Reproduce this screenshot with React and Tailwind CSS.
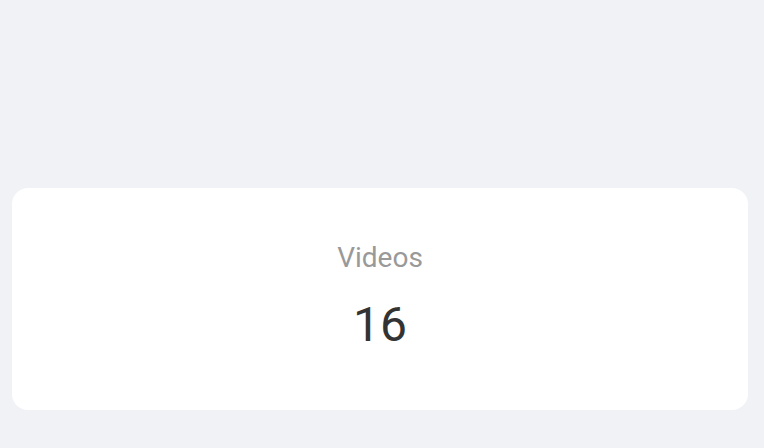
export default function App() {
  return (
    <div
      className="min-h-[448px] bg-[#f0f2f5] pl-3 pr-4 pt-[188px]"
      style={{ fontFamily: 'Roboto, "Liberation Sans", sans-serif' }}
    >
      <div className="flex h-[222px] flex-col items-center justify-center gap-[10px] rounded-2xl bg-white">
        <div className="text-[28px] leading-[42px] text-[#999999]">Videos</div>
        <div className="text-[48px] leading-[72px] text-[#333333]">16</div>
      </div>
    </div>
  )
}
